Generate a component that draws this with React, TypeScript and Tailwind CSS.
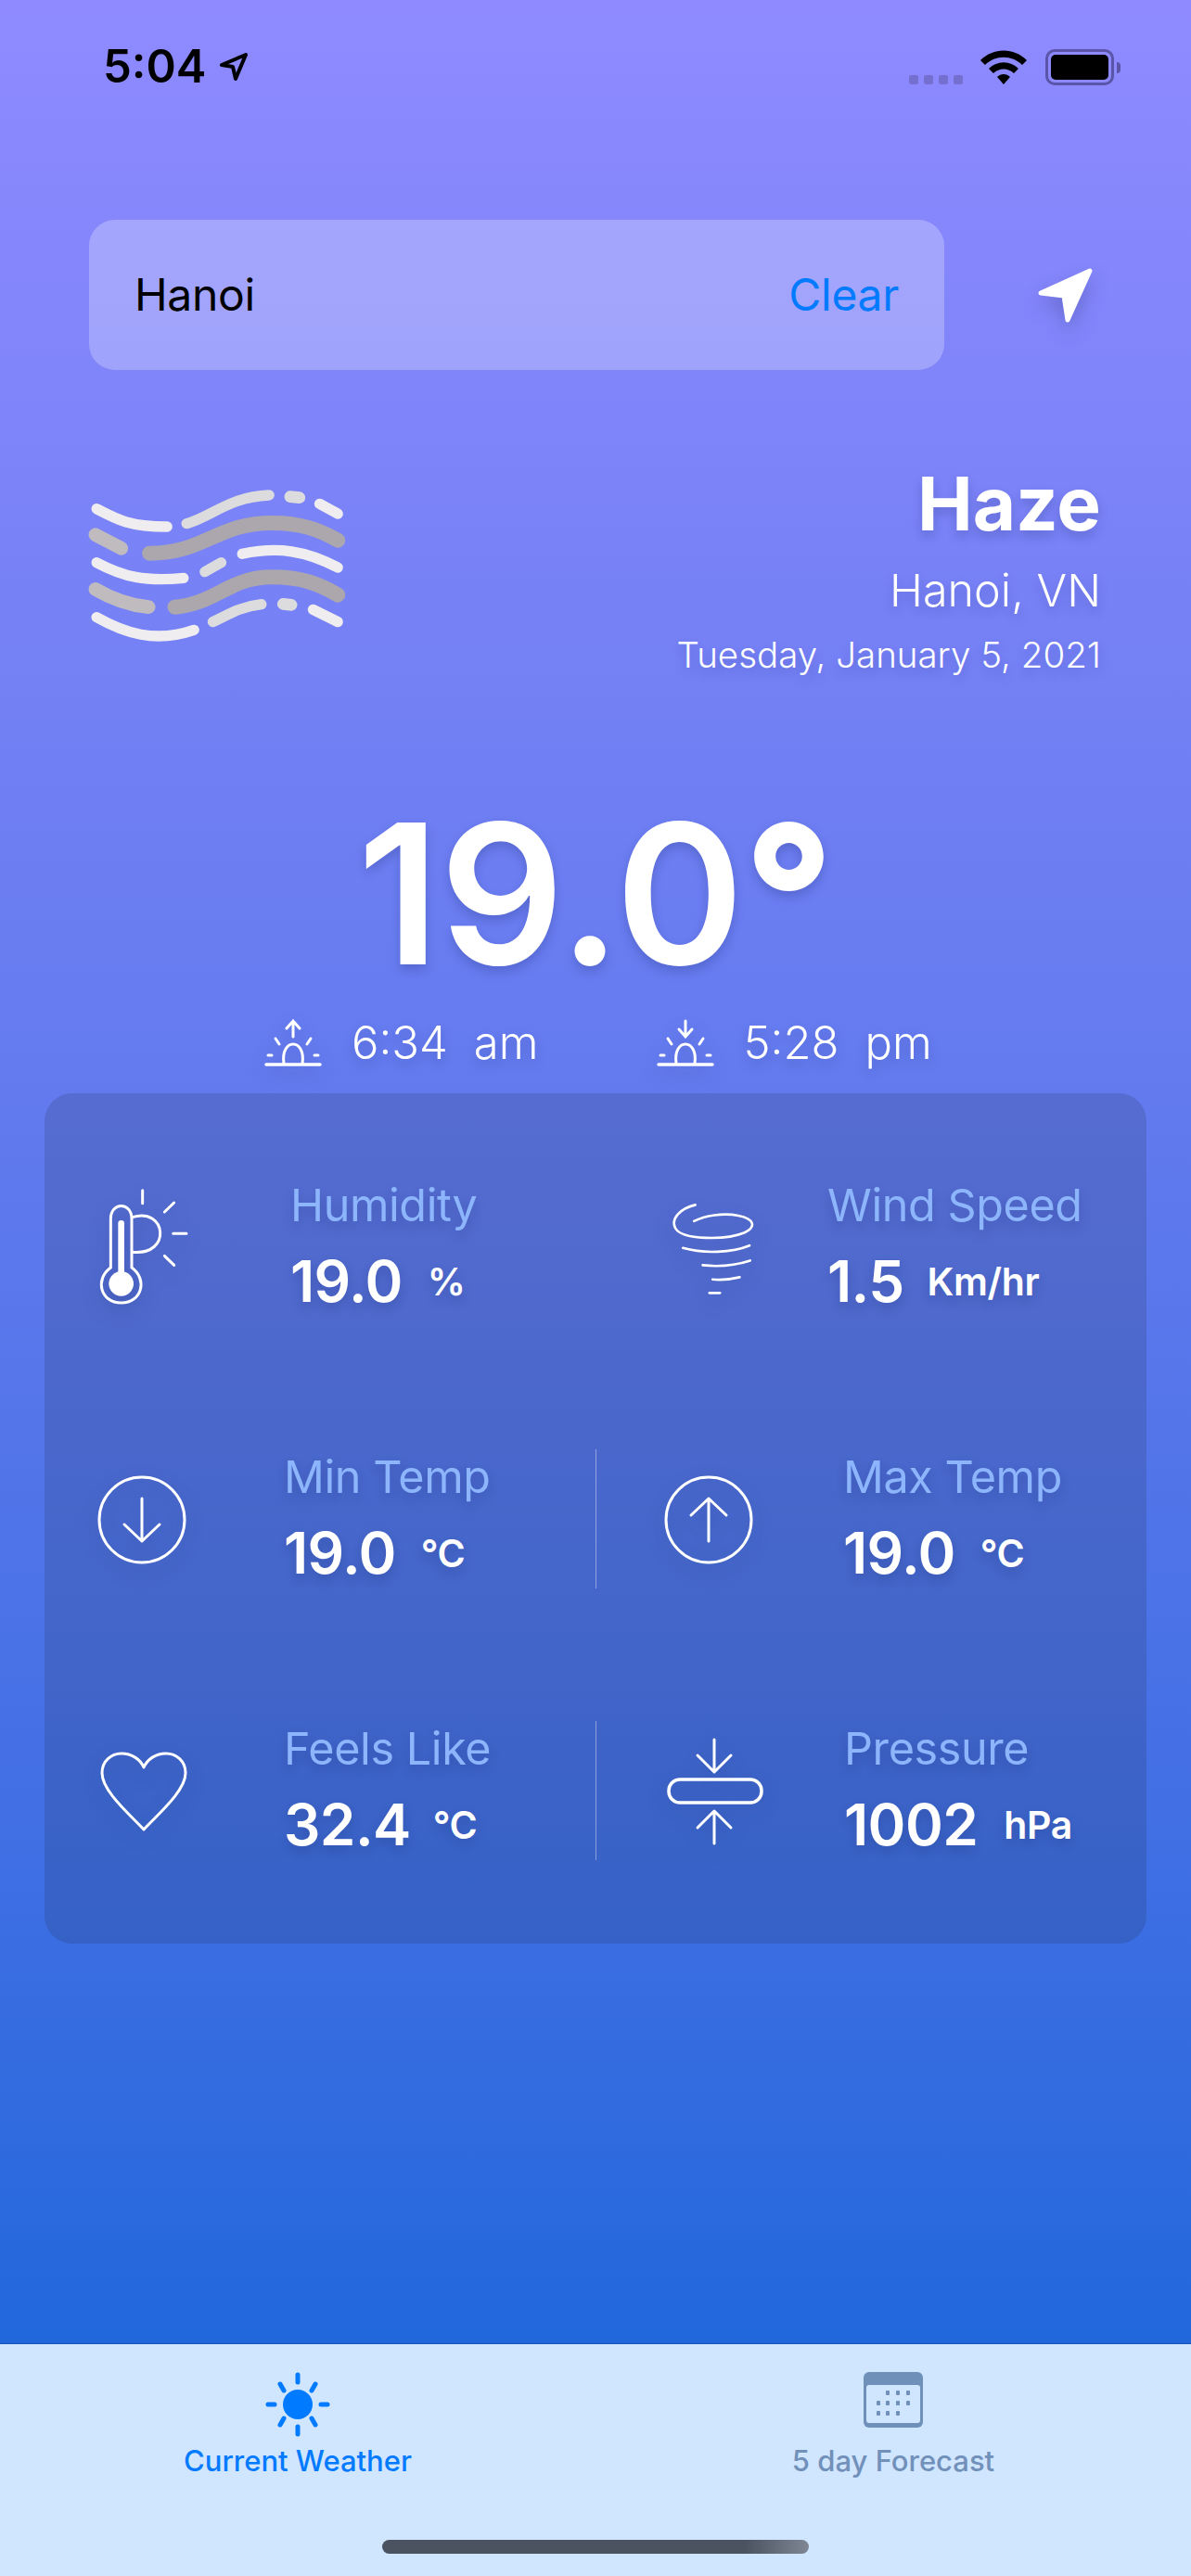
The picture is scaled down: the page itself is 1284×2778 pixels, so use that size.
import React from "react";

const shadow = "drop-shadow-[0_8px_10px_rgba(20,30,90,0.22)]";
const textShadow = "[text-shadow:0_6px_12px_rgba(20,30,90,0.22)]";

const HazeIcon = () => (
  <svg viewBox="90 130 860 510" className="w-[287px] h-[170px]" fill="none" strokeLinecap="round">
    <g stroke="#efedf0" strokeWidth="34">
      <path d="M132 204C200 240 240 262 360 262" />
      <path d="M853 188L912 220" />
      <path d="M603 350C720 325 810 340 912 394" />
      <path d="M132 378C220 425 290 440 413 428" />
      <path d="M832 530L912 570" />
      <path d="M132 555C220 605 320 640 447 596" />
    </g>
    <g stroke="#dcdcde" strokeWidth="34">
      <path d="M423 252C500 232 560 165 690 160" />
      <path d="M758 165L788 168" strokeWidth="38" />
      <path d="M482 408L535 378" />
      <path d="M508 570C560 545 600 520 665 513" />
      <path d="M735 512L762 515" strokeWidth="38" />
    </g>
    <g stroke="#bfbbbf" strokeWidth="44">
      <path d="M128 288L212 332" />
      <path d="M128 464C180 495 230 515 300 522" />
    </g>
    <g stroke="#aca7ad" strokeWidth="48">
      <path d="M303 348C480 348 520 250 700 250C790 250 850 270 912 306" />
      <path d="M385 522C520 510 560 425 700 425C790 425 850 445 912 483" />
    </g>
  </svg>
);

const SunIcon = ({ down }: { down?: boolean }) => (
  <svg viewBox="0 0 62 52" className={`w-[62px] h-[52px] ${shadow}`} fill="none" stroke="white" strokeWidth="3" strokeLinecap="round">
    <path d="M2 49H60" strokeWidth="3.5" />
    <path d="M21 48C19 34 25 27 31 27C37 27 43 34 41 48" />
    <path d="M4 39H8M54 39H58M12 21L16 27M50 21L46 27" />
    {down ? <path d="M31 2V19M24 11L31 19L38 11" /> : <path d="M31 2V19M24 10L31 2L38 10" />}
  </svg>
);

const ThermoIcon = () => (
  <svg viewBox="80 90 300 390" className={`w-[100px] h-[130px] ${shadow}`} fill="none" stroke="white" strokeLinecap="round">
    <path d="M120 348V190C120 135 188 135 188 190V348C240 385 222 462 154 462C86 462 68 385 120 348Z" strokeWidth="9" />
    <path d="M154 205V370" strokeWidth="20" />
    <circle cx="154" cy="400" r="40" fill="white" stroke="none" />
    <path d="M190 185C300 150 320 310 190 298M223 98V140M294 168L325 138M322 238H365M294 310L325 340" strokeWidth="9" />
  </svg>
);

const WindIcon = () => (
  <svg viewBox="70 70 280 310" className={`w-[93px] h-[103px] ${shadow}`} fill="none" stroke="white" strokeWidth="8" strokeLinecap="round">
    <path d="M150 80C100 92 70 125 85 155C105 195 250 195 310 170C350 150 340 125 290 115C240 105 180 115 146 133" />
    <path d="M110 220C180 240 270 235 326 212" />
    <path d="M174 276C230 282 285 275 328 261" />
    <path d="M206 322C235 325 265 322 294 315" />
    <path d="M196 366H230" />
  </svg>
);

const ArrowCircle = ({ up }: { up?: boolean }) => (
  <svg viewBox="0 0 96 96" className={`w-[96px] h-[96px] ${shadow}`} fill="none" stroke="white" strokeWidth="3" strokeLinecap="round" strokeLinejoin="round">
    <circle cx="48" cy="48" r="46" />
    {up ? <path d="M48 71V25M29 43L48 25L67 43" /> : <path d="M48 25V71M29 53L48 71L67 53" />}
  </svg>
);

const HeartIcon = () => (
  <svg viewBox="0 0 94 86" className={`w-[94px] h-[86px] ${shadow}`} fill="none" stroke="white" strokeWidth="3" strokeLinejoin="round">
    <path d="M47 84C30 66 2 42 2 23C2 10 12 2 23 2C34 2 43 8 47 17C51 8 60 2 71 2C82 2 92 10 92 23C92 42 64 66 47 84Z" />
  </svg>
);

const PressureIcon = () => (
  <svg viewBox="0 0 104 116" className={`w-[104px] h-[116px] ${shadow}`} fill="none" stroke="white" strokeWidth="3" strokeLinecap="round" strokeLinejoin="round">
    <path d="M51 2V37M33 19L51 37L69 19" />
    <rect x="2" y="45" width="100" height="25" rx="12" strokeWidth="3.5" />
    <path d="M51 114V79M33 97L51 79L69 97" />
  </svg>
);

const Stat = ({ label, value, unit, unitGap }: { label: string; value: string; unit: string; unitGap: string }) => (
  <div className={`flex flex-col ${textShadow}`}>
    <span className="text-[48.5px] leading-[60px] text-[#8db5fb] tracking-[-0.4px]">{label}</span>
    <div className="flex items-center mt-[22px] text-white leading-[60px]">
      <span className="text-[62px] font-semibold tracking-[-0.6px]">{value}</span>
      <span className={`text-[41px] font-semibold tracking-[-0.4px] ${unitGap}`}>{unit}</span>
    </div>
  </div>
);

const TabBar = () => (
  <div className="h-[251px] bg-[#d0e5fe] border-t border-[#1b55b8] relative">
    <div className="flex pt-[30px]">
      <div className="w-[642px] flex flex-col items-center">
        <svg viewBox="0 0 70 70" className="w-[70px] h-[70px]" fill="none" stroke="#007aff" strokeWidth="5" strokeLinecap="round">
          <circle cx="35" cy="35" r="16" fill="#007aff" stroke="none" />
          <path d="M35 3V11M35 59V67M3 35H10M60 35H67M16 13L20 20M54 13L50 20M16 57L20 50M54 57L50 50" />
        </svg>
        <span className="mt-[7px] text-[31px] leading-[38px] font-medium text-[#007aff]">Current Weather</span>
      </div>
      <div className="w-[642px] flex flex-col items-center">
        <svg viewBox="0 0 64 60" className="w-[64px] h-[60px] mb-[10px]">
          <rect width="64" height="60" rx="6" fill="#6f90b9" />
          <rect x="3" y="14" width="58" height="41" rx="3" fill="#d0e5fe" />
          <g fill="#6f90b9">
            {[[24, 20], [35, 20], [46, 20], [14, 31], [24, 31], [35, 31], [46, 31], [14, 42], [24, 42], [35, 42]].map(([x, y]) => (
              <rect key={`${x}-${y}`} x={x} y={y} width="4" height="5" rx="1" />
            ))}
          </g>
        </svg>
        <span className="mt-[7px] text-[31px] leading-[38px] font-medium text-[#7190ba]">5 day Forecast</span>
      </div>
    </div>
    <div className="absolute left-[412px] bottom-[24px] w-[460px] h-[15px] rounded-full bg-gradient-to-r from-[#4b5260] from-85% to-[#7f8694]" />
  </div>
);

export default function App() {
  return (
    <div className="w-[1284px] h-[2778px] flex flex-col font-['Inter',sans-serif] overflow-hidden">
      <div className="h-[2527px] bg-gradient-to-b from-[#8f8aff] to-[#2167dc]">
        {/* status bar */}
        <div className="flex justify-between items-start pt-[48px] pl-[111px] pr-[76px] h-[237px]">
          <div className="flex items-center">
            <span className="text-[49px] leading-[48px] font-semibold text-black">5:04</span>
            <svg viewBox="0 0 32 32" className="w-[32px] h-[32px] ml-[14px]" fill="none" stroke="black" strokeWidth="4" strokeLinejoin="round">
              <path d="M3 14L29 3L18 29L15 16Z" />
            </svg>
          </div>
          <div className="flex items-start pt-[5px]">
            <div className="flex gap-[6px] mt-[28px]">
              {[0, 1, 2, 3].map((i) => (
                <div key={i} className="w-[10px] h-[10px] rounded-[2px] bg-[#7570cf]" />
              ))}
            </div>
            <svg viewBox="0 0 50 37" className="w-[50px] h-[37px] ml-[19px] mt-px" fill="black">
              <path d="M0 11C14 -3 36 -3 50 11L45 16C34 5 16 5 5 16Z" />
              <path d="M9 20C18 11 32 11 41 20L36 25C30 19 20 19 14 25Z" />
              <path d="M18 29C22 25 28 25 32 29L25 37Z" />
            </svg>
            <div className="ml-[20px] w-[74px] h-[39px] rounded-[10px] border-[3px] border-[#5a55a8] p-[3px]">
              <div className="w-full h-full rounded-[5px] bg-black" />
            </div>
            <div className="w-[4px] h-[12px] mt-[14px] ml-[3px] rounded-r-full bg-[#5a55a8]" />
          </div>
        </div>

        {/* search */}
        <div className="flex items-center pl-[96px]">
          <div className="w-[922px] h-[162px] rounded-[28px] bg-white/25 flex items-center justify-between px-[49px]">
            <span className="text-[48px] text-black tracking-[-0.3px]">Hanoi</span>
            <span className="text-[48px] text-[#007aff] tracking-[-0.3px]">Clear</span>
          </div>
          <svg viewBox="0 0 60 60" className="w-[60px] h-[60px] ml-[101px] mt-[2px] drop-shadow-[0_10px_10px_rgba(20,30,90,0.25)]" fill="white" stroke="white" strokeWidth="5" strokeLinejoin="round">
            <path d="M3 27L56 3L32 56L28 30Z" />
          </svg>
        </div>

        {/* condition */}
        <div className="flex justify-between pl-[90px] pr-[97px] mt-[97px]">
          <div className="mt-[28px]"><HazeIcon /></div>
          <div className={`flex flex-col items-end text-white -mt-[3px] ${textShadow}`}>
            <span className="text-[80px] leading-[100px] font-bold">Haze</span>
            <span className="text-[48.5px] leading-[60px] mt-[14px] font-light">Hanoi, VN</span>
            <span className="text-[38.5px] leading-[48px] mt-[15px] font-light">Tuesday, January 5, 2021</span>
          </div>
        </div>

        {/* temperature */}
        <div className={`flex justify-center mt-[114px] text-white ${textShadow}`}>
          <span className="text-[210px] leading-[240px] font-semibold">
            19.0<span className="font-extrabold">°</span>
          </span>
        </div>

        {/* sun times */}
        <div className={`flex items-center mt-[10px] pl-[285px] h-[62px] text-white text-[49px] font-light ${textShadow}`}>
          <SunIcon />
          <span className="ml-[32px]">6:34</span>
          <span className="ml-[28px]">am</span>
          <div className="ml-[127px]"><SunIcon down /></div>
          <span className="ml-[32px]">5:28</span>
          <span className="ml-[28px]">pm</span>
        </div>

        {/* details card */}
        <div className="mx-[48px] mt-[23px] h-[917px] rounded-[30px] bg-[#1f2a4a]/18 pt-[91px] flex flex-col gap-[143px]">
          <div className="grid grid-cols-2 h-[150px]">
            <div className="flex items-start">
              <div className="w-[265px] pl-[58px] pt-[11px]"><ThermoIcon /></div>
              <Stat label="Humidity" value="19.0" unit="%" unitGap="ml-[27px]" />
            </div>
            <div className="flex items-start">
              <div className="w-[250px] pl-[81px] pt-[26px]"><WindIcon /></div>
              <Stat label="Wind Speed" value="1.5" unit="Km/hr" unitGap="ml-[25px]" />
            </div>
          </div>
          <div className="grid grid-cols-2 h-[150px]">
            <div className="flex items-start">
              <div className="w-[258px] pl-[57px] pt-[28px]"><ArrowCircle /></div>
              <Stat label="Min Temp" value="19.0" unit="°C" unitGap="ml-[27px]" />
            </div>
            <div className="flex items-start border-l border-white/40">
              <div className="w-[266px] pl-[73px] pt-[28px]"><ArrowCircle up /></div>
              <Stat label="Max Temp" value="19.0" unit="°C" unitGap="ml-[27px]" />
            </div>
          </div>
          <div className="grid grid-cols-2 h-[150px]">
            <div className="flex items-start">
              <div className="w-[258px] pl-[60px] pt-[33px]"><HeartIcon /></div>
              <Stat label="Feels Like" value="32.4" unit="°C" unitGap="ml-[24px]" />
            </div>
            <div className="flex items-start border-l border-white/40">
              <div className="w-[267px] pl-[76px] pt-[18px]"><PressureIcon /></div>
              <Stat label="Pressure" value="1002" unit="hPa" unitGap="ml-[28px]" />
            </div>
          </div>
        </div>
      </div>
      <TabBar />
    </div>
  );
}
